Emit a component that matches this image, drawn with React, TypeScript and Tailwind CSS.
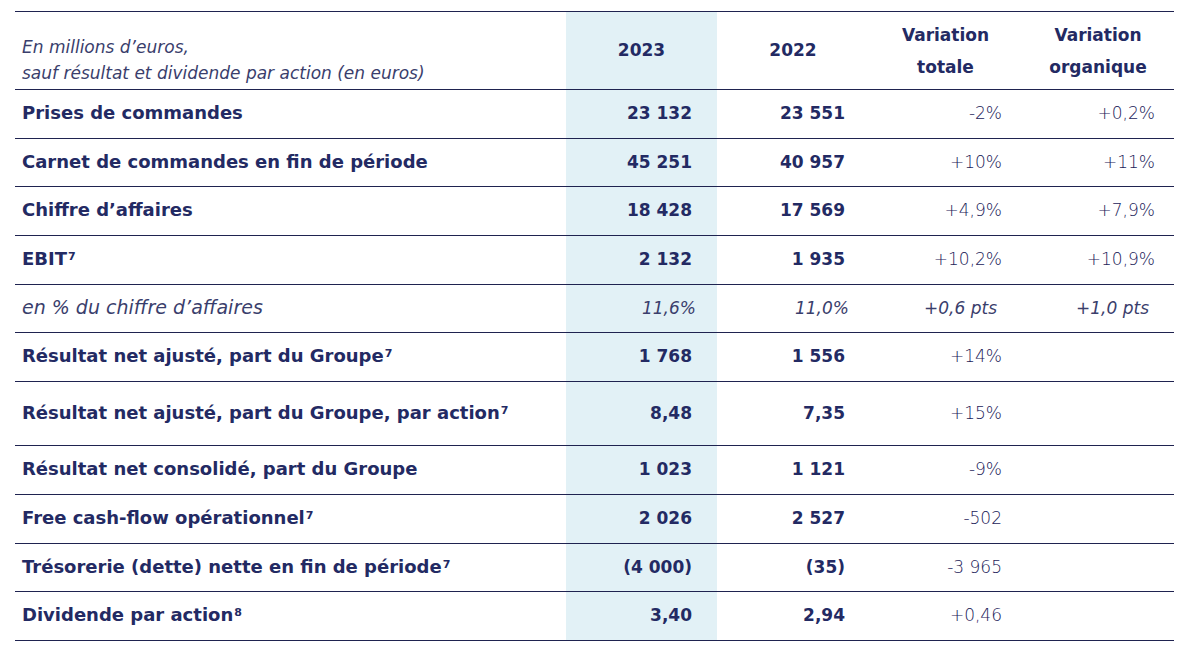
import React from "react";

type Row = {
  label: string;
  sup?: string;
  v23: string;
  v22: string;
  vt?: string;
  vo?: string;
  italic?: boolean;
  h: string;
};

const rows: Row[] = [
  { label: "Prises de commandes", v23: "23 132", v22: "23 551", vt: "-2%", vo: "+0,2%", h: "h-[49px]" },
  { label: "Carnet de commandes en fin de période", v23: "45 251", v22: "40 957", vt: "+10%", vo: "+11%", h: "h-[48px]" },
  { label: "Chiffre d’affaires", v23: "18 428", v22: "17 569", vt: "+4,9%", vo: "+7,9%", h: "h-[49px]" },
  { label: "EBIT", sup: "7", v23: "2 132", v22: "1 935", vt: "+10,2%", vo: "+10,9%", h: "h-[49px]" },
  { label: "en % du chiffre d’affaires", italic: true, v23: "11,6%", v22: "11,0%", vt: "+0,6 pts", vo: "+1,0 pts", h: "h-[48px]" },
  { label: "Résultat net ajusté, part du Groupe", sup: "7", v23: "1 768", v22: "1 556", vt: "+14%", h: "h-[49px]" },
  { label: "Résultat net ajusté, part du Groupe, par action", sup: "7", v23: "8,48", v22: "7,35", vt: "+15%", h: "h-[64px]" },
  { label: "Résultat net consolidé, part du Groupe", v23: "1 023", v22: "1 121", vt: "-9%", h: "h-[49px]" },
  { label: "Free cash-flow opérationnel", sup: "7", v23: "2 026", v22: "2 527", vt: "-502", h: "h-[49px]" },
  { label: "Trésorerie (dette) nette en fin de période", sup: "7", v23: "(4 000)", v22: "(35)", vt: "-3 965", h: "h-[48px]" },
  { label: "Dividende par action", sup: "8", v23: "3,40", v22: "2,94", vt: "+0,46", h: "h-[49px]" },
];

const font = { fontFamily: '"DejaVu Sans", "Liberation Sans", sans-serif' };

export default function App() {
  return (
    <div className="w-[1187px] h-[653px] bg-white pt-[11px] pl-[15px]" style={font}>
      <div className="w-[1159px] text-[#232a63]">
        {/* header */}
        <div className="grid grid-cols-[551px_151px_152px_153px_152px] h-[79px] border-t border-b border-[#1f2350]">
          <div className="flex items-end pb-[3px] pl-[7px] italic font-normal text-[17px] leading-[26px] text-[#3a3e6c]">
            <div>
              En millions d’euros,
              <br />
              sauf résultat et dividende par action (en euros)
            </div>
          </div>
          <div className="bg-[#e2f1f6] flex items-center justify-center font-bold text-[17px]">2023</div>
          <div className="flex items-center justify-center font-bold text-[17px]">2022</div>
          <div className="flex items-center justify-center text-center font-bold text-[17px] leading-[32px]">
            Variation
            <br />
            totale
          </div>
          <div className="flex items-center justify-center text-center font-bold text-[17px] leading-[32px]">
            Variation
            <br />
            organique
          </div>
        </div>
        {rows.map((r, i) => (
          <div
            key={i}
            className={`grid grid-cols-[551px_151px_152px_153px_152px] ${r.h} border-b border-[#1f2350]`}
          >
            <div
              className={`flex items-center pl-[7px] pb-[3px] ${
                r.italic ? "italic font-normal text-[#3a3e6c] text-[19px]" : "font-bold text-[18px]"
              }`}
            >
              <span>
                {r.label}
                {r.sup && <sup className="text-[11px] ml-[1px] -top-[0.45em]">{r.sup}</sup>}
              </span>
            </div>
            <div
              className={`bg-[#e2f1f6] flex items-center justify-end text-[17px] ${
                r.italic ? "italic font-normal text-[#3a3e6c] pr-[21px]" : "font-bold pr-[25px]"
              }`}
            >
              {r.v23}
            </div>
            <div
              className={`flex items-center justify-end text-[17px] ${
                r.italic ? "italic font-normal text-[#3a3e6c] pr-[20px]" : "font-bold pr-[24px]"
              }`}
            >
              {r.v22}
            </div>
            <div
              className={`flex items-center justify-end text-[17px] ${
                r.italic ? "italic font-normal pr-[25px] text-[#3a3e6c]" : "font-extralight pr-[20px] text-[#1c2259]"
              }`}
            >
              {r.vt}
            </div>
            <div
              className={`flex items-center justify-end text-[17px] ${
                r.italic ? "italic font-normal pr-[25px] text-[#3a3e6c]" : "font-extralight pr-[19px] text-[#1c2259]"
              }`}
            >
              {r.vo}
            </div>
          </div>
        ))}
      </div>
    </div>
  );
}
